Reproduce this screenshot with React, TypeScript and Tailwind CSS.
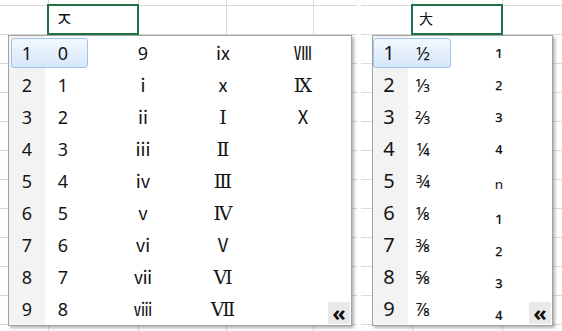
import React from 'react';

const font = "font-['Noto_Sans','Noto_Sans_CJK_KR',sans-serif]";
const serif = "font-['DejaVu_Serif','Noto_Sans_CJK_KR',serif] text-[19px]";

const upper = new Set(['Ⅰ', 'Ⅱ', 'Ⅲ', 'Ⅳ', 'Ⅵ', 'Ⅶ', 'Ⅸ']);

const leftRows = [
  ['0', '9', 'ⅸ', 'Ⅷ'],
  ['1', 'ⅰ', 'ⅹ', 'Ⅸ'],
  ['2', 'ⅱ', 'Ⅰ', 'Ⅹ'],
  ['3', 'ⅲ', 'Ⅱ', ''],
  ['4', 'ⅳ', 'Ⅲ', ''],
  ['5', 'ⅴ', 'Ⅳ', ''],
  ['6', 'ⅵ', 'Ⅴ', ''],
  ['7', 'ⅶ', 'Ⅵ', ''],
  ['8', 'ⅷ', 'Ⅶ', ''],
];

const rightRows = [
  ['½', '¹'],
  ['⅓', '²'],
  ['⅔', '³'],
  ['¼', '⁴'],
  ['¾', 'ⁿ'],
  ['⅛', '₁'],
  ['⅜', '₂'],
  ['⅝', '₃'],
  ['⅞', '₄'],
];

const hl =
  'border-[#9fc3ea] bg-[linear-gradient(to_bottom,#f3f8fe,#d6e7fb)]';

function SheetGrid({ cols, count }: { cols: string; count: number }) {
  const cells = Array.from({ length: 13 * count });
  return (
    <div className={`grid ${cols} grid-rows-[6px_repeat(12,29px)]`}>
      {cells.map((_, i) => (
        <div
          key={i}
          className={`border-b border-[#dadada] ${
            i % count === count - 1 ? '' : 'border-r'
          }`}
        />
      ))}
    </div>
  );
}

function MoreButton() {
  return (
    <div className="absolute right-[1px] bottom-[1px] w-[22px] h-[22px] bg-[#e9e9e9] flex items-center justify-center text-[22px] font-bold leading-none text-[#111] pb-[3px]">
      «
    </div>
  );
}

function Cand({ v, w }: { v: string; w: string }) {
  return (
    <span className={`${w} text-center ${upper.has(v) ? serif : ''}`}>{v}</span>
  );
}

function LeftPopup() {
  return (
    <div className="absolute left-[8px] top-[35px] w-[344px] h-[291px] border border-[#a3a3a3] bg-[linear-gradient(to_right,#f3f3f3_36px,#ffffff_36px)] shadow-[2px_2px_3px_rgba(0,0,0,0.3)] text-[18px] text-[#151515]">
      <div className="pt-[1px]">
        {leftRows.map((r, i) => (
          <div key={i} className="h-[32px] flex items-center">
            <div
              className={`ml-[2px] w-[77px] h-[30px] rounded-[3px] border flex items-center ${
                i === 0 ? hl : 'border-transparent'
              }`}
            >
              <span className="w-[30px] text-center">{i + 1}</span>
              <span className="w-[42px] text-center">{r[0]}</span>
            </div>
            <span className="ml-[15px] w-[80px] text-center">{r[1]}</span>
            <Cand v={r[2]} w="w-[80px]" />
            <Cand v={r[3]} w="w-[80px]" />
          </div>
        ))}
      </div>
      <MoreButton />
    </div>
  );
}

function RightPopup() {
  return (
    <div className="absolute left-[11px] top-[35px] w-[181px] h-[291px] border border-[#a3a3a3] bg-[linear-gradient(to_right,#f3f3f3_35px,#ffffff_35px)] shadow-[2px_2px_3px_rgba(0,0,0,0.3)] text-[18px] text-[#151515]">
      <div className="pt-[1px]">
        {rightRows.map((r, i) => (
          <div key={i} className="h-[32px] flex items-center">
            <div
              className={`w-[78px] h-[30px] rounded-[3px] border flex items-center ${
                i === 0 ? hl : 'border-transparent'
              }`}
            >
              <span className="w-[30px] text-center text-[20px]">{i + 1}</span>
              <span className="w-[38px] text-center">{r[0]}</span>
            </div>
            <span
              className={`w-[96px] text-center text-[21px] leading-[20px] ${
                i < 5 ? 'translate-y-[6px]' : ''
              }`}
            >
              {r[1]}
            </span>
          </div>
        ))}
      </div>
      <MoreButton />
    </div>
  );
}

export default function App() {
  return (
    <div className={`w-[562px] h-[331px] overflow-hidden bg-white flex gap-[4px] ${font}`}>
      <div className="relative w-[357px] h-full overflow-hidden">
        <SheetGrid cols="grid-cols-[49px_90px_88px_87px_1fr]" count={5} />
        <div className="absolute left-[47px] top-[4px] w-[92px] h-[31px] border-2 border-[#217346] pl-[6px] pt-[2px] text-[20px] leading-[24px] text-[#111]">
          ㅈ
        </div>
        <LeftPopup />
      </div>
      <div className="relative flex-1 h-full overflow-hidden">
        <SheetGrid cols="grid-cols-[52px_90px_1fr]" count={3} />
        <div className="absolute left-[50px] top-[4px] w-[92px] h-[31px] border-2 border-[#217346] pl-[6px] pt-[3px] text-[14px] leading-[20px] text-[#111]">
          大
        </div>
        <RightPopup />
      </div>
    </div>
  );
}
